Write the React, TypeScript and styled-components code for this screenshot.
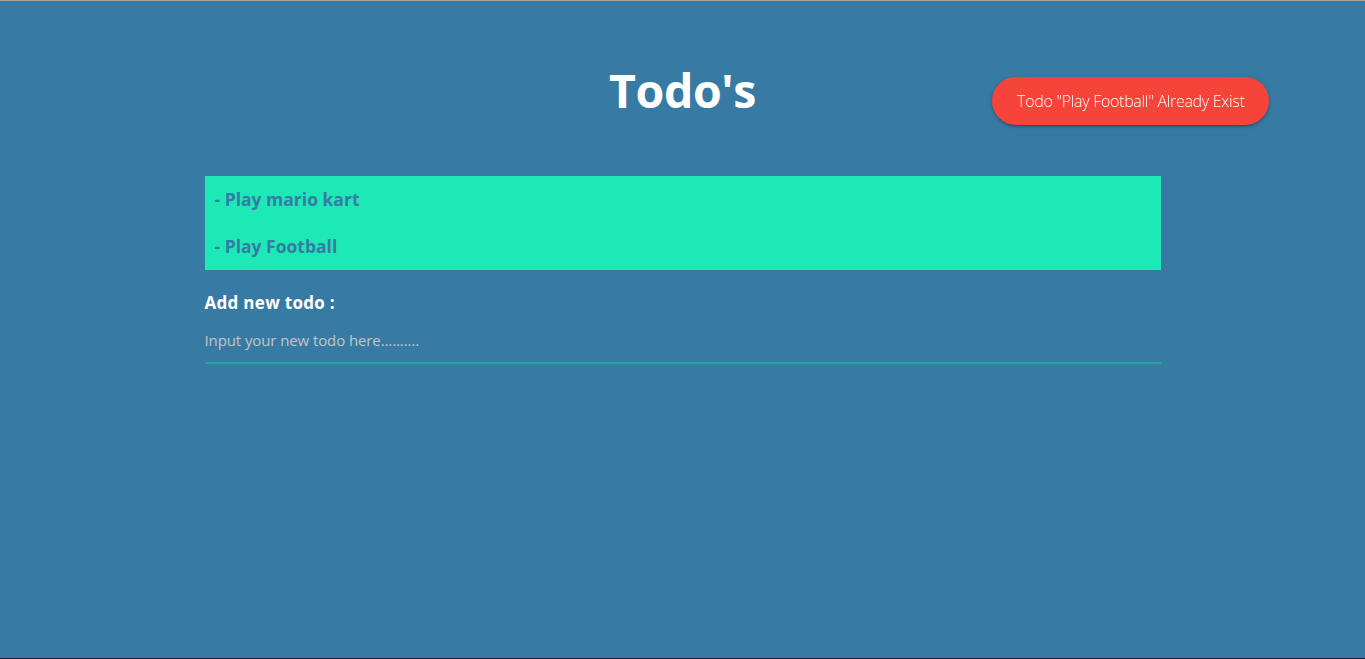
import React from "react";
import styled, { createGlobalStyle } from "styled-components";

const Global = createGlobalStyle`
  html, body { margin: 0; padding: 0; }
  body {
    background: #377ba4;
    font-family: "Open Sans", "Noto Sans", sans-serif;
  }
  * { box-sizing: border-box; }
`;

const Page = styled.div`
  min-height: 100vh;
  border-top: 1px solid #a7a7a7;
  border-bottom: 1px solid #1e1e1e;
  background: #377ba4;
`;

const Container = styled.div`
  width: 956px;
  margin: 0 auto;
  display: flex;
  flex-direction: column;
`;

const Title = styled.h1`
  margin: 54px 0 0;
  height: 121px;
  text-align: center;
  color: #ffffff;
  font-size: 46.5px;
  font-weight: 700;
  line-height: 70px;
  letter-spacing: -0.4px;
`;

const List = styled.ul`
  list-style: none;
  margin: 0;
  padding: 0;
  background: #1de9b6;
`;

const Item = styled.li`
  height: 47px;
  display: flex;
  align-items: center;
  padding: 0 0 2px 10px;
  color: #377ba4;
  font-size: 17.5px;
  font-weight: 700;
  letter-spacing: 0;
`;

const Form = styled.form`
  margin-top: 20px;
  display: flex;
  flex-direction: column;
`;

const Label = styled.label`
  color: #ffffff;
  font-size: 17px;
  font-weight: 700;
  line-height: 26px;
  letter-spacing: 0.3px;
`;

const Input = styled.input`
  height: 47px;
  border: none;
  background: transparent;
  border-bottom: 1px solid #26a69a;
  box-shadow: 0 1px 0 0 #26a69a;
  outline: none;
  padding: 2px 0 0;
  color: #ffffff;
  font-family: "Open Sans", "Noto Sans", sans-serif;
  font-size: 15px;
  letter-spacing: -0.1px;
  &::placeholder { color: #c4c4c4; }
`;

const ToastContainer = styled.div`
  position: fixed;
  top: 10%;
  right: 7%;
`;

const Toast = styled.div`
  margin-top: 11px;
  min-height: 48px;
  padding: 0 25px;
  display: flex;
  align-items: center;
  border-radius: 24px;
  background: #f7443a;
  color: #ffffff;
  font-size: 16px;
  font-weight: 300;
  letter-spacing: -0.3px;
  box-shadow: 0 2px 2px 0 rgba(0,0,0,0.14), 0 3px 1px -2px rgba(0,0,0,0.12), 0 1px 5px 0 rgba(0,0,0,0.2);
`;

export default function App() {
  const todos = ["Play mario kart", "Play Football"];
  return (
    <Page>
      <Global />
      <Container>
        <Title>Todo's</Title>
        <List>
          {todos.map((t) => (
            <Item key={t}>- {t}</Item>
          ))}
        </List>
        <Form onSubmit={(e) => e.preventDefault()}>
          <Label htmlFor="todo">Add new todo :</Label>
          <Input id="todo" autoFocus placeholder="Input your new todo here.........." />
        </Form>
      </Container>
      <ToastContainer>
        <Toast>Todo "Play Football" Already Exist</Toast>
      </ToastContainer>
    </Page>
  );
}
